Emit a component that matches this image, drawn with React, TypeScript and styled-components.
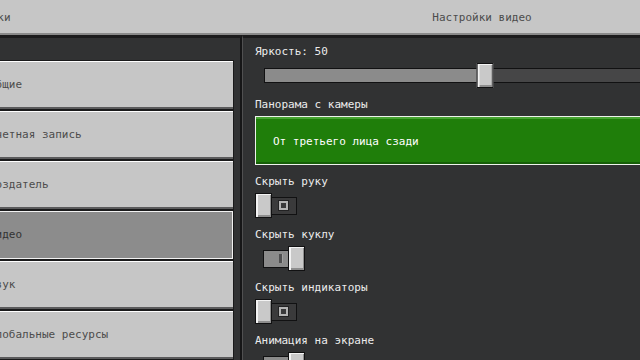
import React from "react";
import styled, { createGlobalStyle } from "styled-components";

const Global = createGlobalStyle`
  html, body { margin: 0; padding: 0; background: #313233; }
  body { font-family: "DejaVu Sans Mono", "Liberation Mono", monospace; }
`;

const Screen = styled.div`
  width: 640px;
  height: 360px;
  overflow: hidden;
  display: flex;
  flex-direction: column;
  background: #313233;
  font-size: 11px;
  line-height: 14px;
`;

const Header = styled.header`
  flex: 0 0 35px;
  box-sizing: border-box;
  display: grid;
  grid-template-columns: 240px 1fr;
  align-items: center;
  background: #c6c6c6;
  border-bottom: 2px solid #8a8a8a;
  color: #4c4c4c;
  padding-top: 2px;
  white-space: nowrap;
`;

const HeaderSide = styled.div`
  margin-left: -49px;
`;

const HeaderTitle = styled.div`
  text-align: center;
  padding-left: 84px;
`;

const Body = styled.div`
  flex: 1;
  display: flex;
  min-height: 0;
`;

const Sidebar = styled.nav`
  flex: 0 0 272px;
  margin-left: -30px;
  box-sizing: border-box;
  background: #313233;
  border-top: 3px solid #1c1c1d;
  border-right: 2px solid #161617;
  padding: 22px 6px 0 6px;
  display: flex;
  flex-direction: column;
`;

const NavButton = styled.div<{ $active?: boolean }>`
  flex: 0 0 50px;
  box-sizing: border-box;
  border: 1px solid #1a1a1b;
  background: ${(p) => (p.$active ? "#8c8c8c" : "#c6c6c6")};
  box-shadow: ${(p) =>
    p.$active
      ? "inset 0 0 0 1px #f2f2f2"
      : "inset 0 1px 0 #ffffff, inset 0 -2px 0 #5b5b5c"};
  color: ${(p) => (p.$active ? "#333333" : "#4c4c4c")};
  display: flex;
  align-items: center;
  padding-left: 12px;
  white-space: nowrap;
`;

const Main = styled.main`
  flex: 0 0 476px;
  box-sizing: border-box;
  background: #313233;
  border-top: 3px solid #1c1c1d;
  border-left: 1px solid #505051;
  padding: 7px 12px 0 12px;
  display: flex;
  flex-direction: column;
`;

const Group = styled.div`
  display: flex;
  flex-direction: column;
  gap: 4px;
  margin-bottom: 10px;
`;

const Label = styled.div`
  height: 14px;
  color: #ececec;
  white-space: nowrap;
`;

const SliderRoot = styled.div`
  position: relative;
  height: 25px;
  width: 442px;
  margin-left: 9px;
  display: flex;
  align-items: center;
`;

const SliderTrack = styled.div`
  width: 100%;
  height: 15px;
  box-sizing: border-box;
  border: 1px solid #111112;
  background: #464647;
  overflow: hidden;
  display: flex;
`;

const SliderFill = styled.div`
  height: 100%;
  background: #8b8b8b;
  border-right: 1px solid #1a1a1a;
`;

const Knob = styled.div`
  position: absolute;
  top: 0;
  width: 17px;
  height: 25px;
  box-sizing: border-box;
  background: #c9c9c9;
  border: 1px solid #111112;
  box-shadow: inset 2px 1px 0 #f3f3f3, inset -1px -2px 0 #8e8e8e;
`;

const SliderKnob = styled(Knob)`
  transform: translateX(-50%);
`;

const Dropdown = styled.div`
  height: 49px;
  box-sizing: border-box;
  border: 1px solid #eef2ec;
  background: #1f7e0a;
  box-shadow: inset 0 2px 0 #47a332, inset 0 -2px 0 #165f07;
  color: #ffffff;
  display: flex;
  align-items: center;
  padding: 2px 0 0 17px;
  white-space: nowrap;
`;

const ToggleRoot = styled.div`
  position: relative;
  width: 34px;
  height: 25px;
  margin-left: 8px;
  display: flex;
  align-items: center;
`;

const ToggleTrack = styled.div<{ $on: boolean }>`
  width: 100%;
  height: 18px;
  box-sizing: border-box;
  border: 1px solid #111112;
  background: ${(p) => (p.$on ? "#8b8b8b" : "#3a3a3b")};
  display: flex;
  align-items: center;
  justify-content: center;
  padding-left: ${(p) => (p.$on ? "0" : "7px")};
`;

const ToggleKnob = styled(Knob)<{ $on: boolean }>`
  ${(p) => (p.$on ? "right: -8px;" : "left: -8px;")}
`;

const OnBar = styled.span`
  width: 3px;
  height: 9px;
  background: #4f4f50;
  box-shadow: 1px 0 0 #a0a0a0;
`;

const OffRing = () => (
  <svg width="11" height="11" viewBox="0 0 11 11">
    <rect x="0.5" y="0.5" width="10" height="10" fill="none" stroke="#222223" />
    <rect x="2" y="2" width="7" height="7" fill="none" stroke="#b4b4b4" strokeWidth="2" />
  </svg>
);

const Toggle = ({ on }: { on: boolean }) => (
  <ToggleRoot>
    <ToggleTrack $on={on}>{on ? <OnBar /> : <OffRing />}</ToggleTrack>
    <ToggleKnob $on={on} />
  </ToggleRoot>
);

const Slider = ({ value }: { value: number }) => (
  <SliderRoot>
    <SliderTrack>
      <SliderFill style={{ width: `${value}%` }} />
    </SliderTrack>
    <SliderKnob style={{ left: `${value}%` }} />
  </SliderRoot>
);

const navItems = [
  "Общие",
  "Учетная запись",
  "Создатель",
  "Видео",
  "Звук",
  "Глобальные ресурсы",
];

const toggles: [string, boolean][] = [
  ["Скрыть руку", false],
  ["Скрыть куклу", true],
  ["Скрыть индикаторы", false],
  ["Анимация на экране", true],
];

export default function App() {
  return (
    <>
      <Global />
      <Screen>
        <Header>
          <HeaderSide>Настройки</HeaderSide>
          <HeaderTitle>Настройки видео</HeaderTitle>
        </Header>
        <Body>
          <Sidebar>
            {navItems.map((n) => (
              <NavButton key={n} $active={n === "Видео"}>
                {n}
              </NavButton>
            ))}
          </Sidebar>
          <Main>
            <Group>
              <Label>Яркость: 50</Label>
              <Slider value={50} />
            </Group>
            <Group>
              <Label>Панорама с камеры</Label>
              <Dropdown>От третьего лица сзади</Dropdown>
            </Group>
            {toggles.map(([label, on]) => (
              <Group key={label}>
                <Label>{label}</Label>
                <Toggle on={on} />
              </Group>
            ))}
          </Main>
        </Body>
      </Screen>
    </>
  );
}
